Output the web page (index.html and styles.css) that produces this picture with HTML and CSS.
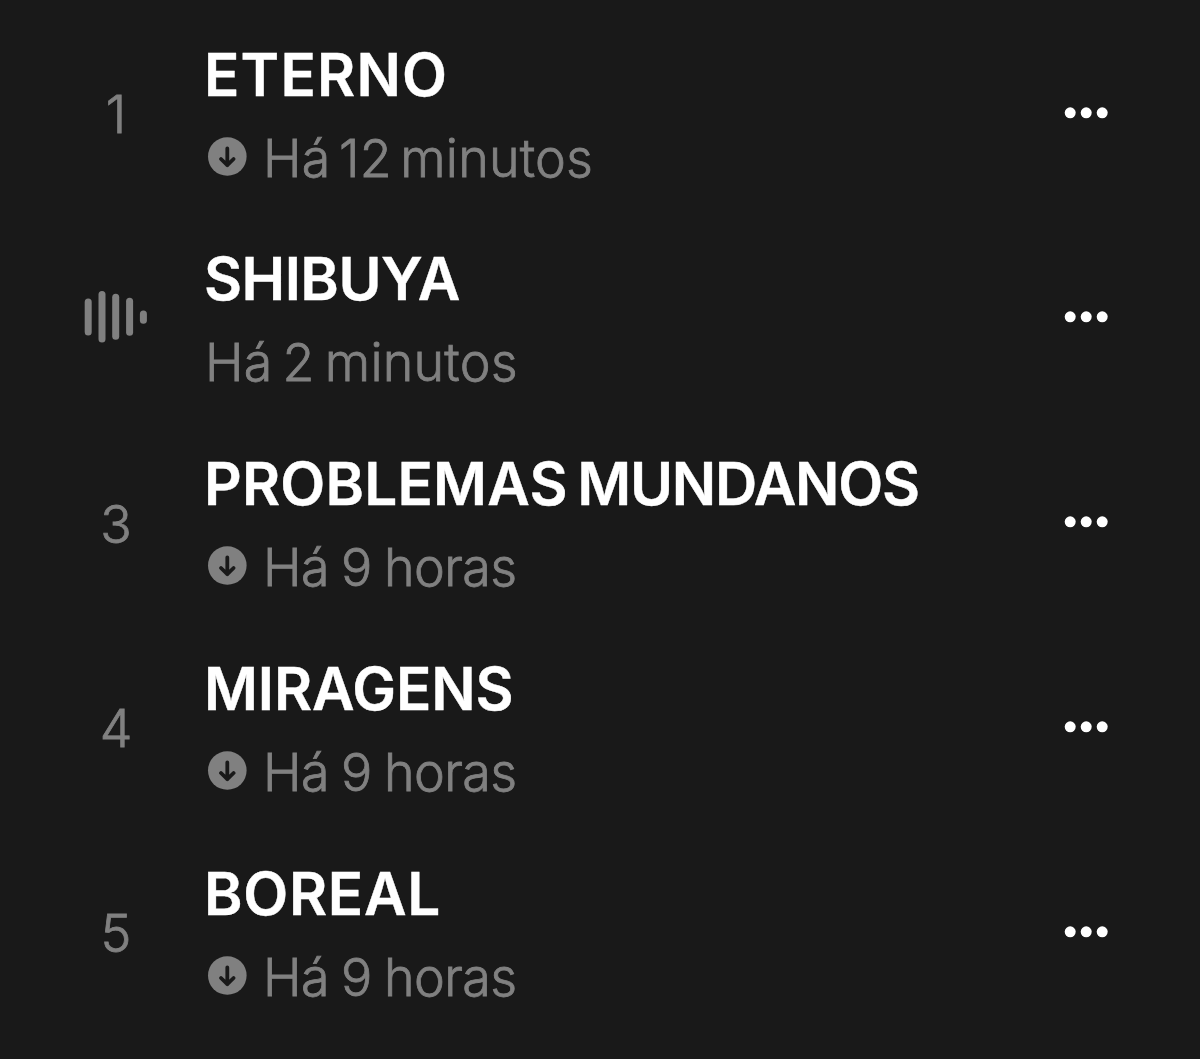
FILE: index.html
```html
<!DOCTYPE html>
<html lang="pt">
<head>
    <meta charset="UTF-8">
    <title>Faixas</title>
    <link rel="stylesheet" href="styles.css">
</head>
<body>

    <!-- Shared icons -->
    <svg class="icon-defs">
        <symbol id="download" viewBox="0 0 40 40">
            <circle cx="20.3" cy="19.5" r="19.3" fill="#808080"/>
            <path d="M20.3 11.4v16.8M14 22l6.3 6.2 6.3-6.2" fill="none" stroke="#191919" stroke-width="3.8" stroke-linecap="round" stroke-linejoin="round"/>
        </symbol>
        <symbol id="more" viewBox="0 0 44 12">
            <circle cx="6.2" cy="5.8" r="5.5"/>
            <circle cx="22.2" cy="5.8" r="5.5"/>
            <circle cx="38.2" cy="5.8" r="5.5"/>
        </symbol>
    </svg>

    <div class="track-list">
        <div class="track">
            <div class="position">1</div>
            <div class="info">
                <div class="title eterno">ETERNO</div>
                <div class="played"><svg class="download"><use href="#download"/></svg><span class="minutes-12">Há 12 minutos</span></div>
            </div>
            <svg class="more"><use href="#more"/></svg>
        </div>

        <div class="track">
            <div class="position playing">
                <svg class="wave" viewBox="0 0 64 52">
                    <rect x="0.7" y="7.5" width="7" height="37" rx="3.5"/>
                    <rect x="14.5" y="0" width="7" height="51.5" rx="3.5"/>
                    <rect x="28.2" y="2.7" width="7" height="46" rx="3.5"/>
                    <rect x="42.1" y="6.7" width="7" height="38" rx="3.5"/>
                    <rect x="55.9" y="19.5" width="7" height="13.2" rx="3.5"/>
                </svg>
            </div>
            <div class="info">
                <div class="title shibuya">SHIBUYA</div>
                <div class="played"><span class="minutes-2">Há 2 minutos</span></div>
            </div>
            <svg class="more"><use href="#more"/></svg>
        </div>

        <div class="track">
            <div class="position">3</div>
            <div class="info">
                <div class="title"><span class="problemas">PROBLEMAS </span><span class="mundanos">MUNDANOS</span></div>
                <div class="played"><svg class="download"><use href="#download"/></svg><span class="hours">Há 9 horas</span></div>
            </div>
            <svg class="more"><use href="#more"/></svg>
        </div>

        <div class="track">
            <div class="position">4</div>
            <div class="info">
                <div class="title miragens">MIRAGENS</div>
                <div class="played"><svg class="download"><use href="#download"/></svg><span class="hours">Há 9 horas</span></div>
            </div>
            <svg class="more"><use href="#more"/></svg>
        </div>

        <div class="track">
            <div class="position">5</div>
            <div class="info">
                <div class="title boreal">BOREAL</div>
                <div class="played"><svg class="download"><use href="#download"/></svg><span class="hours">Há 9 horas</span></div>
            </div>
            <svg class="more"><use href="#more"/></svg>
        </div>
    </div>

</body>
</html>
```
FILE: styles.css
```css
body {
    font-family: Inter, "Liberation Sans", sans-serif;
    background-color: #191919;
    margin: 0;
    height: 1059px;
    overflow: hidden;
}

.icon-defs {
    display: none;
}

.track-list {
    padding-top: 10.2px;
}

.track {
    display: flex;
    align-items: center;
    height: 204.75px;
    padding-right: 92px;
}

/* Number column */
.position {
    width: 232px;
    margin-right: -28px;
    padding-top: 5px;
    box-sizing: border-box;
    text-align: center;
    font-size: 52px;
    line-height: 76px;
    font-weight: 300;
    -webkit-text-stroke: 0.8px #808080;
    color: #808080;
}

.playing {
    display: flex;
    justify-content: center;
    padding-top: 0;
}

.wave {
    width: 64px;
    height: 52px;
    fill: #808080;
}

.info {
    flex: 1;
    padding-top: 8px;
}

.title {
    font-size: 58.5px;
    line-height: 80px;
    font-weight: 600;
    -webkit-text-stroke: 0.4px #fff;
    color: #fff;
    white-space: nowrap;
}

.eterno {
    letter-spacing: 1.2px;
}

.shibuya {
    letter-spacing: -0.5px;
}

.problemas {
    letter-spacing: 0.2px;
    word-spacing: -5.5px;
}

.mundanos {
    letter-spacing: -1.2px;
}

.miragens {
    letter-spacing: -0.1px;
}

.boreal {
    letter-spacing: 0.7px;
}

.played {
    display: flex;
    align-items: center;
    height: 84px;
    font-size: 52px;
    line-height: 84px;
    font-weight: 300;
    -webkit-text-stroke: 0.8px #808080;
    color: #808080;
    white-space: nowrap;
}

.played span {
    padding-top: 4px;
}

.minutes-12 {
    letter-spacing: 0.2px;
    word-spacing: -6.3px;
}

.minutes-2 {
    margin-left: 1px;
    letter-spacing: 0.2px;
    word-spacing: -4.7px;
}

.hours {
    letter-spacing: -0.6px;
    word-spacing: -1.8px;
}

.download {
    width: 40px;
    height: 40px;
    margin-left: 3px;
    margin-right: 16px;
}

.more {
    width: 44px;
    height: 12px;
    fill: #fff;
}
```
